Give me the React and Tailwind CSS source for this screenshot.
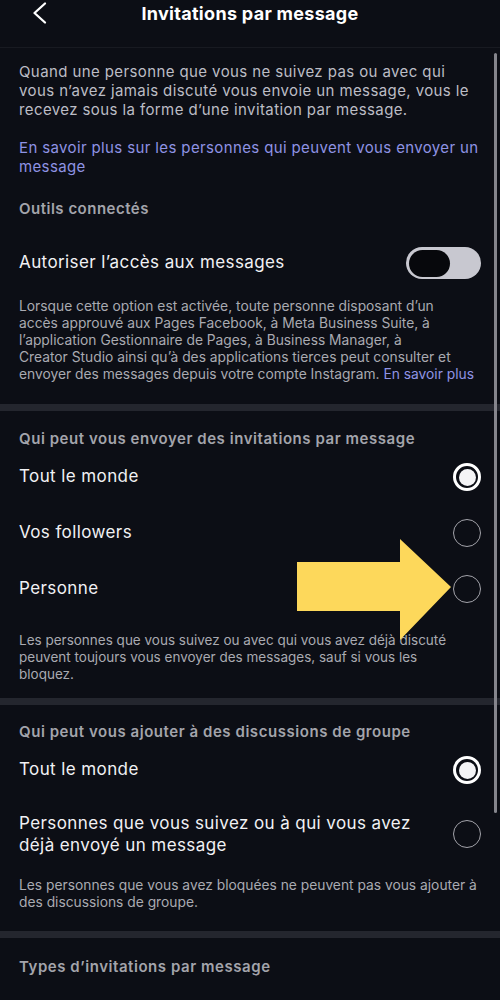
import React from "react";

function Radio({ on }) {
  if (on) {
    return (
      <div className="w-[28px] h-[28px] rounded-full border-[3px] border-white flex items-center justify-center shrink-0">
        <div className="w-[17px] h-[17px] rounded-full bg-[#f4f4f6]" />
      </div>
    );
  }
  return <div className="w-[28px] h-[28px] rounded-full border-[1.5px] border-[#a3a3aa] shrink-0" />;
}

function Row({ label, on }) {
  return (
    <div className="h-[56px] flex items-center justify-between">
      <span className="text-[17px] tracking-[0.4px] text-[#f1f1f4]">{label}</span>
      <Radio on={on} />
    </div>
  );
}

function Divider({ cls }) {
  return <div className={"h-[7px] bg-[#24262e] -mx-[19px] " + cls} />;
}

export default function App() {
  return (
    <div
      className="relative w-[500px] h-[1000px] overflow-hidden bg-[#0c0e15]"
      style={{ fontFamily: "Inter, 'Noto Sans', sans-serif" }}
    >
      {/* header */}
      <div className="h-[48px] border-b border-[#181a21] relative">
        <div className="h-[26px] flex items-center justify-center">
          <span className="text-[18px] font-bold text-white tracking-[0.3px]">Invitations par message</span>
        </div>
        <svg className="absolute left-[30px] top-[1px]" width="20" height="24" viewBox="0 0 20 24" fill="none">
          <path d="M15 2.5 L4.5 12 L15 21.5" stroke="white" strokeWidth="2.3" strokeLinecap="round" strokeLinejoin="round" />
        </svg>
      </div>

      <div className="px-[19px]">
        <p className="pt-[14px] text-[15px] leading-[19px] tracking-[0.4px] text-[#bcbdc5] pr-[6px]">
          Quand une personne que vous ne suivez pas ou avec qui vous n’avez jamais discuté vous envoie un message, vous le recevez sous la forme d’une invitation par message.
        </p>
        <p className="mt-[19px] text-[15px] leading-[19px] tracking-[0.37px] text-[#8f93e4]">
          En savoir plus sur les personnes qui peuvent vous envoyer un message
        </p>
        <div className="mt-[23px] text-[15px] leading-[20px] font-semibold tracking-[0.5px] text-[#a3a4ab]">Outils connectés</div>
        <div className="mt-[22px] h-[44px] flex items-center justify-between">
          <span className="text-[17px] tracking-[0.4px] text-[#f1f1f4]">Autoriser l’accès aux messages</span>
          <div className="w-[75px] h-[32px] rounded-full bg-[#c8c8d0] flex items-center pl-[3px]">
            <div className="w-[41px] h-[27px] rounded-full bg-[#07080c]" />
          </div>
        </div>
        <p className="mt-[13px] text-[13.8px] leading-[17px] text-[#a9aab1] -mr-[19px] whitespace-nowrap">
          Lorsque cette option est activée, toute personne disposant d’un<br />
          accès approuvé aux Pages Facebook, à Meta Business Suite, à<br />
          l’application Gestionnaire de Pages, à Business Manager, à<br />
          Creator Studio ainsi qu’à des applications tierces peut consulter et<br />
          envoyer des messages depuis votre compte Instagram. <span className="text-[#8f93e4]">En savoir plus</span>
        </p>
        <Divider cls="mt-[21px]" />

        <div className="mt-[18px] text-[15px] leading-[20px] font-semibold tracking-[0.55px] text-[#a3a4ab]">Qui peut vous envoyer des invitations par message</div>
        <Row label="Tout le monde" on />
        <Row label="Vos followers" />
        <Row label="Personne" />
        <p className="mt-[15px] text-[13.5px] leading-[17px] text-[#a9aab1] -mr-[19px] whitespace-nowrap">
          Les personnes que vous suivez ou avec qui vous avez déjà discuté<br />
          peuvent toujours vous envoyer des messages, sauf si vous les<br />
          bloquez.
        </p>
        <Divider cls="mt-[15px]" />

        <div className="mt-[17px] text-[15px] leading-[20px] font-semibold tracking-[0.55px] text-[#a3a4ab]">Qui peut vous ajouter à des discussions de groupe</div>
        <Row label="Tout le monde" on />
        <div className="h-[72px] flex items-center justify-between">
          <span className="text-[17px] leading-[22px] tracking-[0.4px] text-[#f1f1f4] w-[410px]">Personnes que vous suivez ou à qui vous avez déjà envoyé un message</span>
          <Radio />
        </div>
        <p className="mt-[7px] text-[13.8px] leading-[17px] text-[#a9aab1] -mr-[19px] whitespace-nowrap">
          Les personnes que vous avez bloquées ne peuvent pas vous ajouter à<br />
          des discussions de groupe.
        </p>
        <Divider cls="mt-[20px]" />
        <div className="mt-[19px] text-[15px] leading-[20px] font-semibold tracking-[0.55px] text-[#a3a4ab]">Types d’invitations par message</div>
      </div>

      {/* scrollbar */}
      <div className="absolute right-[3px] top-[53px] w-[3px] h-[760px] rounded-full bg-[#85858c]" />

      {/* yellow arrow */}
      <svg className="absolute left-[297px] top-[539px]" width="156" height="102" viewBox="0 0 156 102">
        <polygon points="0,23 103,23 103,0 154,48 103,101 103,72 0,72" fill="#fdd85b" />
      </svg>
    </div>
  );
}
